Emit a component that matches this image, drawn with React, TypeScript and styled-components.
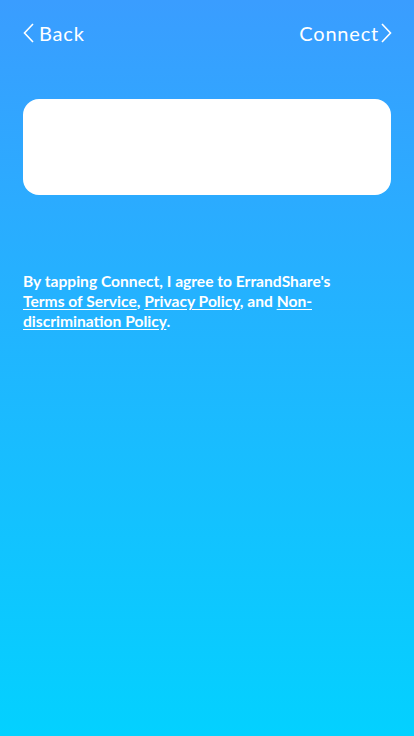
import React from "react";
import styled, { createGlobalStyle } from "styled-components";

const Global = createGlobalStyle`
  html, body { margin: 0; padding: 0; }
  body { font-family: Lato, "Noto Sans", sans-serif; }
`;

const Screen = styled.div`
  width: 414px;
  height: 736px;
  background: linear-gradient(180deg, #3a9dff 0%, #03d1ff 100%);
  display: flex;
  flex-direction: column;
  padding: 0 22px 0 23px;
  box-sizing: border-box;
  color: #fff;
`;

const NavBar = styled.div`
  height: 66px;
  display: flex;
  align-items: center;
  justify-content: space-between;
`;

const NavButton = styled.button<{ $gap: number }>`
  background: none;
  border: none;
  padding: 0;
  color: #fff;
  font-family: Lato, "Noto Sans", sans-serif;
  font-size: 20px;
  font-weight: 400;
  letter-spacing: 0.8px;
  display: flex;
  align-items: center;
  gap: ${(p) => p.$gap}px;
  cursor: pointer;
`;

const Card = styled.div`
  margin-top: 33px;
  margin-right: 1px;
  height: 96px;
  background: #fff;
  border-radius: 16px;
`;

const Legal = styled.p`
  margin: 76px 1px 0 0;
  font-size: 15.6px;
  line-height: 20px;
  font-weight: 700;
`;

const Link = styled.a<{ $nowrap?: boolean }>`
  color: #fff;
  text-decoration: underline;
  text-underline-offset: 2px;
  white-space: ${(p) => (p.$nowrap ? "nowrap" : "normal")};
`;

const Chevron = ({ dir }: { dir: "left" | "right" }) => (
  <svg width="11" height="20" viewBox="0 0 11 20" fill="none">
    <path
      d={dir === "left" ? "M10 1 L1.5 10 L10 19" : "M1 1 L9.5 10 L1 19"}
      stroke="#fff"
      strokeWidth="1.6"
    />
  </svg>
);

export default function App() {
  return (
    <>
      <Global />
      <Screen>
        <NavBar>
          <NavButton $gap={5}>
            <Chevron dir="left" />
            Back
          </NavButton>
          <NavButton $gap={2}>
            Connect
            <Chevron dir="right" />
          </NavButton>
        </NavBar>
        <Card />
        <Legal>
          By tapping Connect, I agree to ErrandShare's{" "}
          <Link $nowrap>Terms of Service</Link>,{" "}
          <Link $nowrap>Privacy Policy</Link>, and{" "}
          <Link>Non-discrimination Policy</Link>.
        </Legal>
      </Screen>
    </>
  );
}
